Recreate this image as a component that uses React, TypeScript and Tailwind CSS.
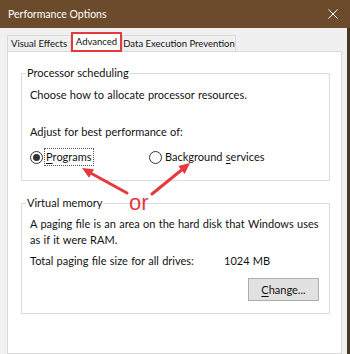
import React from 'react'

const RED = '#e5393e'

function Radio({ checked }: { checked?: boolean }) {
  return (
    <span className="w-[13px] h-[13px] rounded-full border border-[#333] bg-white flex items-center justify-center shrink-0">
      {checked && <span className="w-[7px] h-[7px] rounded-full bg-[#333]" />}
    </span>
  )
}

function Annotations() {
  // red arrows + "or" drawn over the dialog
  return (
    <svg className="absolute inset-0 pointer-events-none" width="350" height="354" viewBox="0 0 350 354">
      <line x1="127" y1="193" x2="91.5" y2="173.5" stroke={RED} strokeWidth="3" strokeLinecap="round" />
      <polygon points="82,168 94,169.2 89,177.8" fill={RED} />
      <line x1="152" y1="194" x2="181.5" y2="170" stroke={RED} strokeWidth="3" strokeLinecap="round" />
      <polygon points="190,163 184.7,173.9 178.3,166.1" fill={RED} />
      <text x="129" y="210" fontSize="22" fill={RED} fontFamily="'Liberation Sans', Arial, sans-serif">
        or
      </text>
    </svg>
  )
}

export default function App() {
  return (
    <div
      className="w-[350px] h-[354px] overflow-hidden bg-[#f0f0f0] relative flex flex-col text-[11px] text-[#111] leading-[16px] [word-spacing:0.5px]"
      style={{ fontFamily: "Lato, Roboto, sans-serif" }}
    >
      {/* Title bar */}
      <div className="h-[28px] bg-[#6b4b2c] flex items-center justify-between pl-[8px] pr-[12px] text-white shrink-0">
        <span className="text-[10.5px] [word-spacing:0px]">Performance Options</span>
        <svg width="10" height="10" viewBox="0 0 10 10">
          <path d="M0.5 0.5 L9.5 9.5 M9.5 0.5 L0.5 9.5" stroke="white" strokeWidth="1" />
        </svg>
      </div>

      <div className="flex flex-1 min-h-0">
        <div className="w-[347px] pl-[7px] pt-[4px] flex flex-col">
          {/* Tabs */}
          <div className="h-[19px] flex items-end relative z-10 text-[9.5px] [word-spacing:0px]">
            <div className="w-[64px] h-[16px] border border-b-0 border-[#d9d9d9] bg-[#f0f0f0] flex items-center justify-center whitespace-nowrap">
              Visual Effects
            </div>
            <div className="w-[51px] h-[20px] mb-[-1px] border-2 border-[#e5393e] bg-white flex items-center justify-center whitespace-nowrap">
              Advanced
            </div>
            <div className="w-[114px] h-[16px] border border-b-0 border-[#d9d9d9] bg-[#f0f0f0] flex items-center justify-center whitespace-nowrap">
              Data Execution Prevention
            </div>
          </div>

          {/* Tab page */}
          <div className="w-[335px] flex-1 bg-white border border-[#d9d9d9] pt-[13px]">
            <fieldset className="ml-[13px] mr-[11px] min-w-0 border border-[#dcdcdc] pl-[8px] pr-[10px] pb-[14px]">
              <legend className="ml-[-4px] px-[1px]">Processor scheduling</legend>
              <div className="pt-[6px]">Choose how to allocate processor resources.</div>
              <div className="mt-[21px]">Adjust for best performance of:</div>
              <div className="mt-[8px] flex items-center h-[18px]">
                <div className="w-[119px] flex items-center">
                  <Radio checked />
                  <span className="ml-[1px] px-[1px] h-[18px] flex items-center border border-dotted border-[#555]">
                    <span className="underline underline-offset-2">P</span>rograms
                  </span>
                </div>
                <div className="flex items-center">
                  <Radio />
                  <span className="ml-[3px]">
                    Background <span className="underline underline-offset-2">s</span>ervices
                  </span>
                </div>
              </div>
            </fieldset>

            <fieldset className="mt-[14px] ml-[13px] mr-[11px] min-w-0 border border-[#dcdcdc] pl-[8px] pr-[10px] pb-[12px]">
              <legend className="ml-[-4px] px-[1px]">Virtual memory</legend>
              <div className="pt-[5px] whitespace-nowrap">
                A paging file is an area on the hard disk that Windows uses
                <br />
                as if it were RAM.
              </div>
              <div className="mt-[5px] flex">
                <span className="w-[194px]">Total paging file size for all drives:</span>
                <span>1024 MB</span>
              </div>
              <div className="mt-[9px] flex justify-end">
                <button className="w-[71px] h-[23px] bg-[#e1e1e1] border border-[#adadad] flex items-center justify-center">
                  <span>
                    <span className="underline underline-offset-2">C</span>hange...
                  </span>
                </button>
              </div>
            </fieldset>
          </div>
        </div>
        <div className="w-[3px] bg-[#4a3826]" />
      </div>

      <Annotations />
    </div>
  )
}
